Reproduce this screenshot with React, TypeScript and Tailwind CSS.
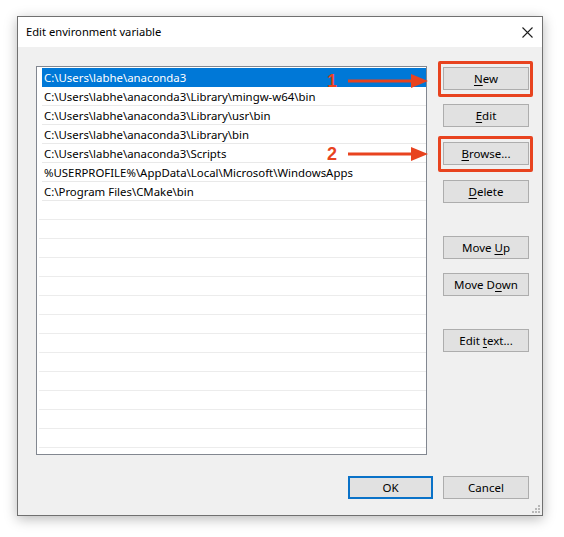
import React from "react";

const items = [
  "C:\\Users\\labhe\\anaconda3",
  "C:\\Users\\labhe\\anaconda3\\Library\\mingw-w64\\bin",
  "C:\\Users\\labhe\\anaconda3\\Library\\usr\\bin",
  "C:\\Users\\labhe\\anaconda3\\Library\\bin",
  "C:\\Users\\labhe\\anaconda3\\Scripts",
  "%USERPROFILE%\\AppData\\Local\\Microsoft\\WindowsApps",
  "C:\\Program Files\\CMake\\bin",
];

function Btn({
  pre,
  u,
  post,
  className = "",
}: {
  pre?: string;
  u?: string;
  post?: string;
  className?: string;
}) {
  return (
    <div
      className={
        "h-[23px] w-[86px] flex items-center justify-center bg-[#e1e1e1] border border-[#adadad] text-[11.5px] text-black leading-none " +
        className
      }
    >
      <span>
        {pre}
        {u && <span className="underline underline-offset-[2px]">{u}</span>}
        {post}
      </span>
    </div>
  );
}

function Arrow({ label }: { label: string }) {
  return (
    <div className="flex items-center">
      <span className="font-['Liberation_Sans',sans-serif] font-bold text-[18px] leading-none text-[#e8431f] w-[21px]">
        {label}
      </span>
      <svg width="80" height="14" viewBox="0 0 80 14">
        <rect x="0" y="5.5" width="66" height="3" fill="#e8431f" />
        <polygon points="63,0 80,7 63,14" fill="#e8431f" />
      </svg>
    </div>
  );
}

export default function App() {
  return (
    <div className="w-[564px] h-[537px] bg-white pt-[16px] pl-[17px] font-['Noto_Sans',sans-serif] text-[11.4px] text-black">
      <div className="relative w-[526px] h-[500px] border border-[#707070] bg-[#f0f0f0] shadow-[0_3px_12px_rgba(0,0,0,0.28)] flex flex-col">
        {/* Title bar */}
        <div className="h-[30px] bg-white flex items-center justify-between pl-[8px] pr-[9px]">
          <span className="text-[11.2px] text-black">Edit environment variable</span>
          <svg width="11" height="11" viewBox="0 0 11 11">
            <path d="M0.5 0.5 L10.5 10.5 M10.5 0.5 L0.5 10.5" stroke="#1e1e1e" strokeWidth="1.1" fill="none" />
          </svg>
        </div>

        {/* Body */}
        <div className="flex-1 flex flex-col pt-[19px]">
          <div className="flex">
            {/* List box */}
            <div className="ml-[18px] w-[391px] h-[389px] border border-[#828790] bg-white overflow-hidden pt-[1px]">
              {items.map((t, i) => (
                <div
                  key={i}
                  className={
                    "ml-[5px] h-[19px] flex items-center pl-[2px] pt-[1px] whitespace-nowrap " +
                    (i === 0
                      ? "bg-[#0078d7] text-white"
                      : "border-b border-[#e9e9e9]")
                  }
                >
                  {t}
                </div>
              ))}
              {Array.from({ length: 14 }).map((_, i) => (
                <div key={"e" + i} className="ml-[2px] h-[19px] border-b border-[#ececec]" />
              ))}
            </div>

            {/* Buttons column */}
            <div className="ml-[16px] pt-[1px] flex flex-col">
              <Btn u="N" post="ew" />
              <Btn u="E" post="dit" className="mt-[14px]" />
              <Btn u="B" post="rowse..." className="mt-[15px]" />
              <Btn u="D" post="elete" className="mt-[15px]" />
              <Btn pre="Move " u="U" post="p" className="mt-[33px]" />
              <Btn pre="Move D" u="o" post="wn" className="mt-[14px]" />
              <Btn pre="Edit " u="t" post="ext..." className="mt-[33px]" />
            </div>
          </div>

          {/* Footer */}
          <div className="flex justify-end gap-[10px] mt-[21px] pr-[13px]">
            <div className="h-[23px] w-[85px] flex items-center justify-center bg-[#e1e1e1] border-2 border-[#0a72c8] text-[11.5px]">
              OK
            </div>
            <div className="h-[23px] w-[86px] flex items-center justify-center bg-[#e1e1e1] border border-[#adadad] text-[11.5px]">
              Cancel
            </div>
          </div>
        </div>

        {/* Resize grip */}
        <svg className="absolute right-[1px] bottom-[1px]" width="9" height="9" viewBox="0 0 9 9">
          <rect x="6" y="0" width="2" height="2" fill="#b8b8b8" />
          <rect x="3" y="3" width="2" height="2" fill="#b8b8b8" />
          <rect x="6" y="3" width="2" height="2" fill="#b8b8b8" />
          <rect x="0" y="6" width="2" height="2" fill="#b8b8b8" />
          <rect x="3" y="6" width="2" height="2" fill="#b8b8b8" />
          <rect x="6" y="6" width="2" height="2" fill="#b8b8b8" />
        </svg>

        {/* Annotations */}
        <div className="absolute left-[420px] top-[44px] w-[95px] h-[36px] border-[3px] border-[#e8431f] rounded-[2px]" />
        <div className="absolute left-[420px] top-[119px] w-[95px] h-[36px] border-[3px] border-[#e8431f] rounded-[2px]" />
        <div className="absolute left-[309px] top-[55px]">
          <Arrow label="1" />
        </div>
        <div className="absolute left-[309px] top-[128px]">
          <Arrow label="2" />
        </div>
      </div>
    </div>
  );
}
